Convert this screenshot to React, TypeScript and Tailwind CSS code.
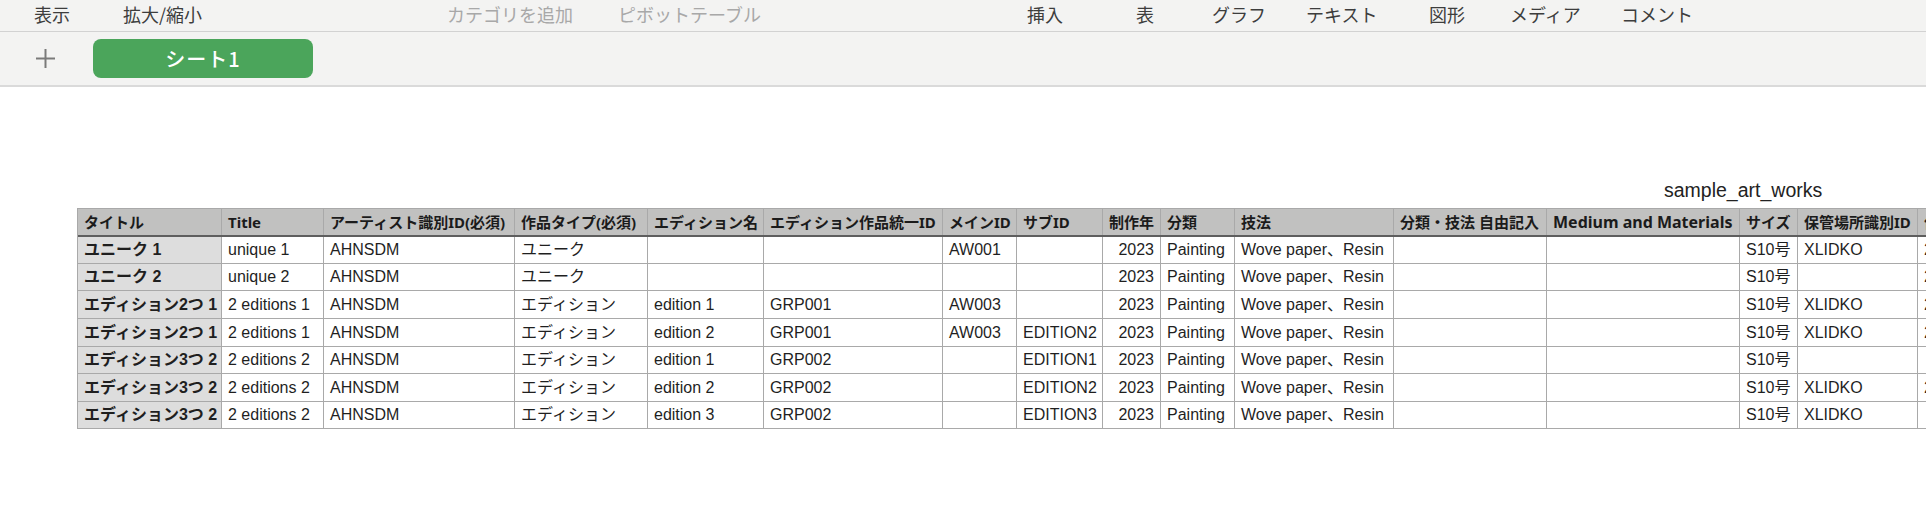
import React from "react";

const colW = [
  "w-[144px]",
  "w-[102px]",
  "w-[191px]",
  "w-[133px]",
  "w-[116px]",
  "w-[179px]",
  "w-[74px]",
  "w-[86px]",
  "w-[58px]",
  "w-[74px]",
  "w-[159px]",
  "w-[153px]",
  "w-[193px]",
  "w-[58px]",
  "w-[120px]",
  "w-[120px]",
];

const headers = [
  "タイトル",
  "Title",
  "アーティスト識別ID(必須)",
  "作品タイプ(必須)",
  "エディション名",
  "エディション作品統一ID",
  "メインID",
  "サブID",
  "制作年",
  "分類",
  "技法",
  "分類・技法 自由記入",
  "Medium and Materials",
  "サイズ",
  "保管場所識別ID",
  "作成日",
];

const W = "Wove paper、Resin";
const rows: string[][] = [
  ["ユニーク 1", "unique 1", "AHNSDM", "ユニーク", "", "", "AW001", "", "2023", "Painting", W, "", "", "S10号", "XLIDKO", "2024/01/01"],
  ["ユニーク 2", "unique 2", "AHNSDM", "ユニーク", "", "", "", "", "2023", "Painting", W, "", "", "S10号", "", "2024/01/01"],
  ["エディション2つ 1", "2 editions 1", "AHNSDM", "エディション", "edition 1", "GRP001", "AW003", "", "2023", "Painting", W, "", "", "S10号", "XLIDKO", "2024/01/01"],
  ["エディション2つ 1", "2 editions 1", "AHNSDM", "エディション", "edition 2", "GRP001", "AW003", "EDITION2", "2023", "Painting", W, "", "", "S10号", "XLIDKO", "2024/01/01"],
  ["エディション3つ 2", "2 editions 2", "AHNSDM", "エディション", "edition 1", "GRP002", "", "EDITION1", "2023", "Painting", W, "", "", "S10号", "", ""],
  ["エディション3つ 2", "2 editions 2", "AHNSDM", "エディション", "edition 2", "GRP002", "", "EDITION2", "2023", "Painting", W, "", "", "S10号", "XLIDKO", "2024/01/01"],
  ["エディション3つ 2", "2 editions 2", "AHNSDM", "エディション", "edition 3", "GRP002", "", "EDITION3", "2023", "Painting", W, "", "", "S10号", "XLIDKO", ""],
];

const rowH = ["h-[27px]", "h-[27px]", "h-[28px]", "h-[28px]", "h-[27px]", "h-[28px]", "h-[27px]"];

const menu: { label: string; w: string; dim?: boolean }[] = [
  { label: "表示", w: "w-[89px]" },
  { label: "拡大/縮小", w: "w-[324px]" },
  { label: "カテゴリを追加", w: "w-[171px]", dim: true },
  { label: "ピボットテーブル", w: "w-[409px]", dim: true },
  { label: "挿入", w: "w-[109px]" },
  { label: "表", w: "w-[76px]" },
  { label: "グラフ", w: "w-[94px]" },
  { label: "テキスト", w: "w-[123px]" },
  { label: "図形", w: "w-[81px]" },
  { label: "メディア", w: "w-[111px]" },
  { label: "コメント", w: "w-[120px]" },
];

export default function App() {
  return (
    <div className="w-[1926px] h-[524px] overflow-hidden bg-white">
      {/* toolbar labels */}
      <div className="h-[31px] bg-[#f3f3f2] flex items-start pl-[34px] pt-[2px] font-['Noto_Sans_CJK_JP',sans-serif] text-[18px] leading-[24px]">
        {menu.map((m) => (
          <div
            key={m.label}
            className={`${m.w} shrink-0 whitespace-nowrap ${m.dim ? "text-[#a8a8a8]" : "text-[#3d3d3d]"}`}
          >
            {m.label}
          </div>
        ))}
      </div>
      <div className="h-px bg-[#d2d2d2]" />
      {/* sheet tabs */}
      <div className="h-[53px] bg-[#f3f3f2] flex items-center pl-[35px]">
        <svg width="21" height="21" viewBox="0 0 21 21" className="shrink-0">
          <line x1="10.5" y1="1" x2="10.5" y2="20" stroke="#7a7a7a" strokeWidth="2" />
          <line x1="1" y1="10.5" x2="20" y2="10.5" stroke="#7a7a7a" strokeWidth="2" />
        </svg>
        <div className="ml-[37px] w-[220px] h-[39px] rounded-[8px] bg-[#4ba55b] flex items-center justify-center text-white text-[20px] font-medium font-['Noto_Sans_CJK_JP',sans-serif] tracking-[1px]">
          シート1
        </div>
      </div>
      <div className="h-[2px] bg-[#dadada]" />
      {/* canvas */}
      <div className="pt-[91px]">
        <div className="h-[24px] pl-[1664px] text-[19.5px] leading-[24px] text-[#222] font-['Liberation_Sans',sans-serif] whitespace-nowrap">
          sample_art_works
        </div>
        <div className="mt-[6px] ml-[77px] flex flex-col border-t border-l border-[#a9a9a9] w-max">
          <div className="flex h-[28px] bg-[#c1c1c0] border-b-2 border-b-[#5e5e5e]">
            {headers.map((h, i) => (
              <div
                key={i}
                className={`${colW[i]} shrink-0 flex items-center px-[6px] whitespace-nowrap overflow-hidden border-r border-[#a9a9a9] font-bold ${
                  i === 12 ? "text-[16px]" : "text-[15px]"
                } text-[#1b1b1b] font-['Noto_Sans','Noto_Sans_CJK_JP',sans-serif]`}
              >
                {h}
              </div>
            ))}
          </div>
          {rows.map((r, ri) => (
            <div key={ri} className={`flex ${rowH[ri]} border-b border-[#a9a9a9]`}>
              {r.map((c, ci) => (
                <div
                  key={ci}
                  className={`${colW[ci]} shrink-0 flex items-center px-[6px] whitespace-nowrap overflow-hidden border-r border-[#a9a9a9] text-[16px] text-[#1f1f1f] font-['Liberation_Sans','Noto_Sans_CJK_JP',sans-serif] ${
                    ci === 0 ? "bg-[#dddddd] font-bold" : "bg-white"
                  } ${ci === 8 ? "justify-end" : ""}`}
                >
                  {c}
                </div>
              ))}
            </div>
          ))}
        </div>
      </div>
    </div>
  );
}
